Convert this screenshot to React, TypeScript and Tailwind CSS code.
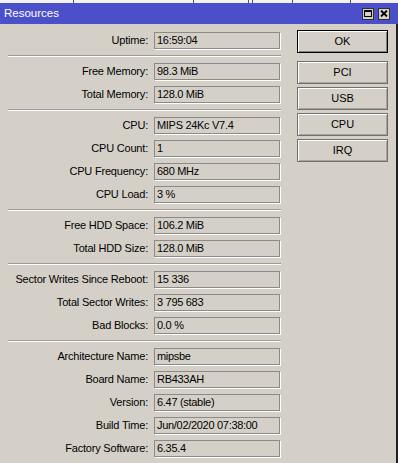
import React from "react";

type Row = { label: string; value: string };

const groups: Row[][] = [
  [{ label: "Uptime:", value: "16:59:04" }],
  [
    { label: "Free Memory:", value: "98.3 MiB" },
    { label: "Total Memory:", value: "128.0 MiB" },
  ],
  [
    { label: "CPU:", value: "MIPS 24Kc V7.4" },
    { label: "CPU Count:", value: "1" },
    { label: "CPU Frequency:", value: "680 MHz" },
    { label: "CPU Load:", value: "3 %" },
  ],
  [
    { label: "Free HDD Space:", value: "106.2 MiB" },
    { label: "Total HDD Size:", value: "128.0 MiB" },
  ],
  [
    { label: "Sector Writes Since Reboot:", value: "15 336" },
    { label: "Total Sector Writes:", value: "3 795 683" },
    { label: "Bad Blocks:", value: "0.0 %" },
  ],
  [
    { label: "Architecture Name:", value: "mipsbe" },
    { label: "Board Name:", value: "RB433AH" },
    { label: "Version:", value: "6.47 (stable)" },
    { label: "Build Time:", value: "Jun/02/2020 07:38:00" },
    { label: "Factory Software:", value: "6.35.4" },
  ],
];

const Field = ({ label, value }: Row) => (
  <div className="flex h-[17px] items-center">
    <div className="w-[141px] shrink-0 pr-[1px] text-right whitespace-nowrap tracking-[-0.2px]">{label}</div>
    <div className="ml-[5px] flex h-[17px] w-[126px] items-center border border-[#8a8a8a] pl-[2px] shadow-[1px_1px_0_#ffffff] whitespace-nowrap tracking-[-0.3px]">
      {value}
    </div>
  </div>
);

const Separator = () => (
  <div className="h-[2px] w-[273px] border-t border-[#a09c94] border-b border-b-white" />
);

const WinButton = ({ children, primary }: { children: React.ReactNode; primary?: boolean }) => (
  <button
    className={`flex h-[23px] w-[91px] items-center justify-center bg-[#d4d0c8] ${
      primary
        ? "border border-black shadow-[inset_1px_1px_0_#ffffff,inset_-1px_-1px_0_#808080]"
        : "border border-[#707070] shadow-[inset_1px_1px_0_#ffffff,inset_-1px_-1px_0_#a8a49c]"
    }`}
  >
    {children}
  </button>
);

export default function App() {
  return (
    <div className="h-[463px] w-[398px] overflow-hidden bg-[#d4d0c8] text-[11px] leading-none text-black [font-family:'Liberation_Sans',Arial,sans-serif]">
      {/* window behind */}
      <div className="flex h-[3px] bg-[#f2f2f2]">
        <div className="w-[73px]" />
        <div className="w-[120px] border-l border-[#555]" />
        <div className="w-[55px] border-l border-[#555]" />
        <div className="w-[4px] border-l border-[#555]" />
        <div className="w-[40px] border-l border-[#555]" />
        <div className="w-[58px] border-l border-[#555]" />
        <div className="w-[2px] border-l border-[#555]" />
      </div>

      {/* title bar */}
      <div className="flex h-[21px] items-center bg-[#4b4fc9] pl-[4px] pr-[8px]">
        <span className="text-[11.5px] text-white">Resources</span>
        <div className="ml-auto flex gap-[4px]">
          <div className="flex h-[12px] w-[12px] items-center justify-center border border-[#303030] bg-[#d4d0c8]">
            <svg width="8" height="7" viewBox="0 0 8 7">
              <rect x="0.5" y="0.5" width="7" height="6" fill="none" stroke="#000" />
              <rect x="0" y="0" width="8" height="2" fill="#000" />
            </svg>
          </div>
          <div className="flex h-[12px] w-[12px] items-center justify-center border border-[#303030] bg-[#d4d0c8]">
            <svg width="8" height="7" viewBox="0 0 8 7">
              <path d="M1 0.5 L7 6.5 M7 0.5 L1 6.5" stroke="#000" strokeWidth="1.8" />
            </svg>
          </div>
        </div>
      </div>

      {/* body */}
      <div className="flex h-[439px] border-r-2 border-r-[#202020]">
        <div className="flex flex-col gap-[6px] pl-[8px] pt-[8px]">
          {groups.map((g, gi) => (
            <React.Fragment key={gi}>
              {gi > 0 && <Separator />}
              {g.map((r) => (
                <Field key={r.label} {...r} />
              ))}
            </React.Fragment>
          ))}
        </div>
        <div className="ml-[16px] flex flex-col pt-[6px]">
          <WinButton primary>OK</WinButton>
          <div className="mt-[8px] flex flex-col gap-[3px]">
            <WinButton>PCI</WinButton>
            <WinButton>USB</WinButton>
            <WinButton>CPU</WinButton>
            <WinButton>IRQ</WinButton>
          </div>
        </div>
      </div>
    </div>
  );
}
